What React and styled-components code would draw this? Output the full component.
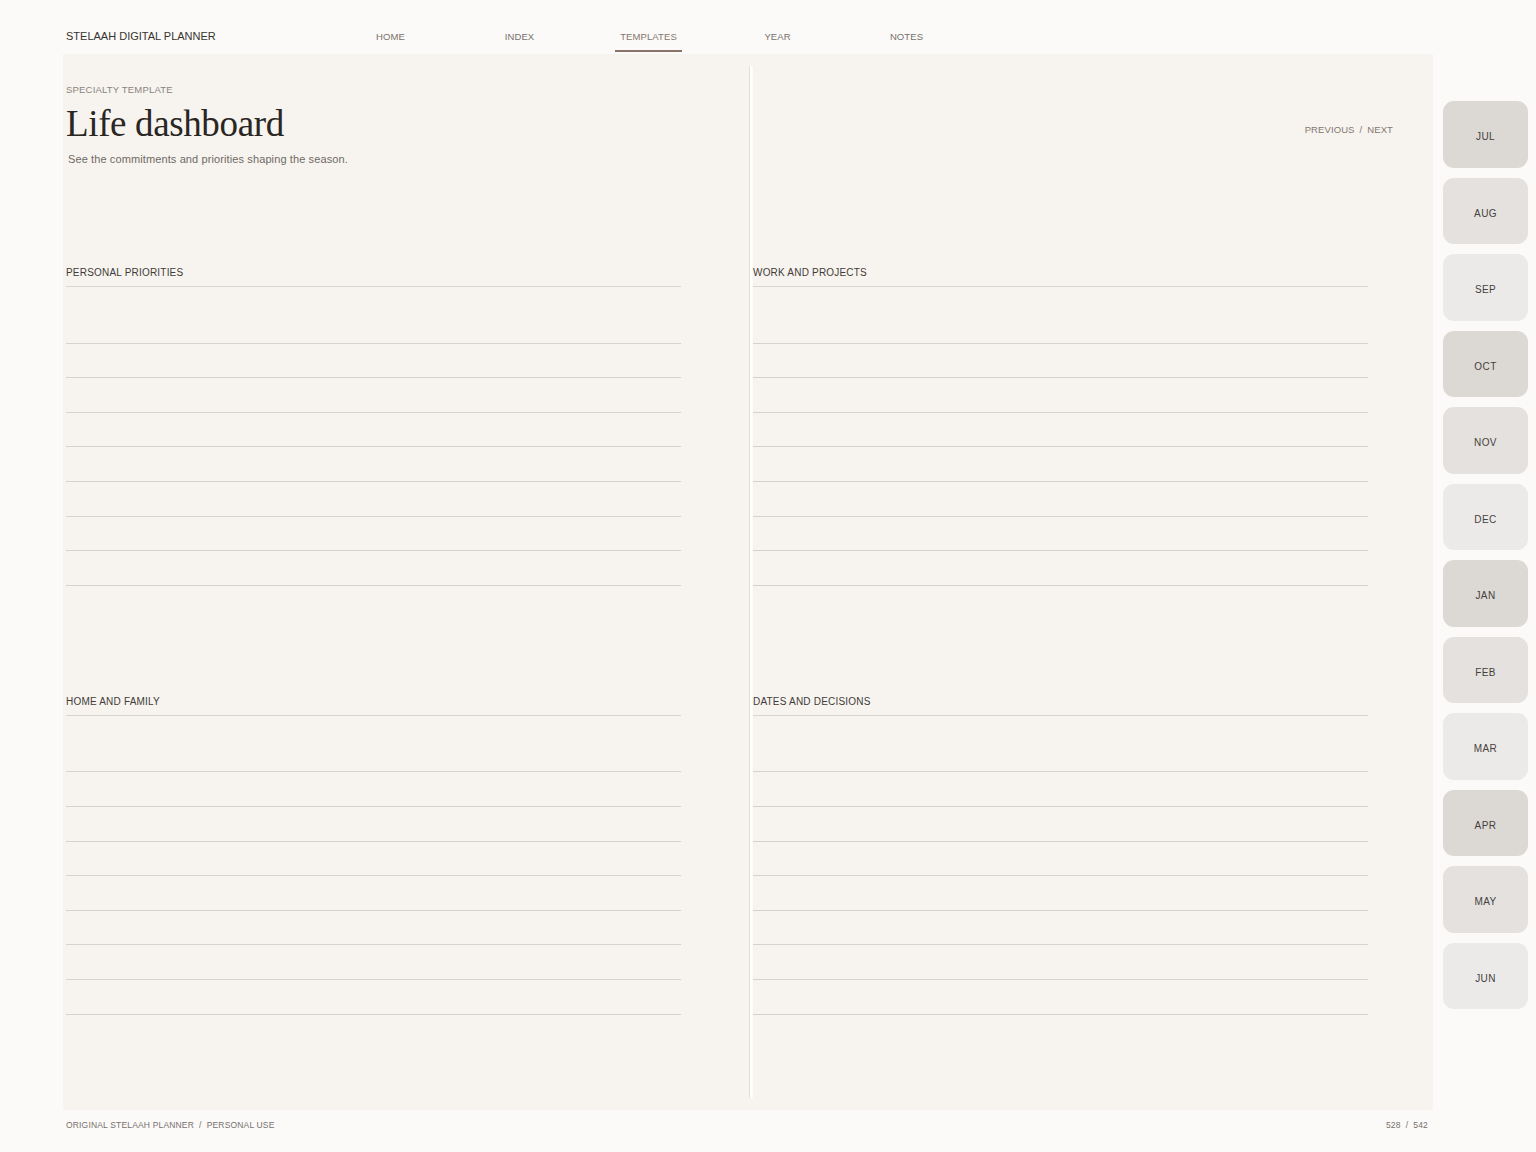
import React from 'react'
import styled, { createGlobalStyle } from 'styled-components'

const GlobalStyle = createGlobalStyle`
  html, body {
    margin: 0;
    padding: 0;
    background: #fbfaf8;
  }
  body {
    font-family: "Liberation Sans", Arial, sans-serif;
    color: #3d3935;
  }
  * {
    box-sizing: border-box;
  }
`

const NAV = ['HOME', 'INDEX', 'TEMPLATES', 'YEAR', 'NOTES']
const MONTHS = ['JUL', 'AUG', 'SEP', 'OCT', 'NOV', 'DEC', 'JAN', 'FEB', 'MAR', 'APR', 'MAY', 'JUN']
const TAB_TONES = ['#dcd8d4', '#e4e1de', '#eceae8']

const Shell = styled.div`
  width: 1536px;
  height: 1152px;
  padding-left: 63px;
  display: flex;
  flex-direction: column;
`

const Header = styled.header`
  height: 54px;
  flex-shrink: 0;
  display: grid;
  grid-template-columns: 260px repeat(5, 129px);
  align-items: end;
  padding-left: 3px;
  padding-bottom: 2px;
`

const Brand = styled.div`
  font-size: 11px;
  line-height: 11px;
  color: #37332f;
  padding-bottom: 10px;
  white-space: nowrap;
`

const NavItem = styled.a`
  justify-self: center;
  font-size: 9.5px;
  line-height: 11px;
  letter-spacing: 0.01em;
  padding: 0 5px 8px;
  color: ${p => (p.$active ? '#85766e' : '#77716c')};
  border-bottom: 2px solid ${p => (p.$active ? '#8a7469' : 'transparent')};
  text-decoration: none;
`

const Main = styled.div`
  display: flex;
  height: 1056px;
  flex-shrink: 0;
`

const Paper = styled.div`
  width: 1370px;
  background: #f7f4ef;
  display: flex;
`

const LeftPage = styled.section`
  width: 686px;
  padding-left: 3px;
  display: flex;
  flex-direction: column;
`

const RightPage = styled.section`
  flex: 1;
  display: flex;
  flex-direction: column;
`

const Spine = styled.div`
  width: 4px;
  margin: 12px 0;
  background: linear-gradient(
    to right,
    #e2ddd7 0,
    #e2ddd7 1px,
    #ffffff 1px,
    #ffffff 3px,
    #f9f7f3 4px
  );
`

const PageHead = styled.div`
  height: 212px;
  flex-shrink: 0;
  display: flex;
  flex-direction: column;
  align-items: ${p => (p.$right ? 'flex-end' : 'flex-start')};
  padding-top: ${p => (p.$right ? '70px' : '30px')};
  padding-right: ${p => (p.$right ? '40px' : '0')};
`

const Eyebrow = styled.div`
  font-size: 9.5px;
  line-height: 12px;
  letter-spacing: 0.02em;
  color: #8a837e;
`

const Title = styled.h1`
  margin: 9px 0 0;
  font-family: "Liberation Serif", "Times New Roman", serif;
  font-weight: 400;
  font-size: 37px;
  line-height: 37px;
  letter-spacing: -0.01em;
  color: #2a2623;
`

const Lede = styled.p`
  margin: 10px 0 0 2px;
  font-size: 11px;
  line-height: 14px;
  letter-spacing: 0.01em;
  color: #6f6964;
`

const Pager = styled.div`
  display: flex;
  gap: 5px;
  font-size: 9.5px;
  line-height: 12px;
  letter-spacing: 0.01em;
  color: #85776f;
`

const Section = styled.div`
  width: 615px;
  flex-shrink: 0;
  margin-bottom: 109px;
`

const SectionLabel = styled.div`
  font-size: 10px;
  line-height: 13px;
  letter-spacing: 0.02em;
  color: #3f3b37;
  padding-bottom: 7px;
  border-bottom: 1px solid #d9d5d0;
`

const Lines = styled.div`
  margin-top: 22px;
`

const Line = styled.div`
  height: 34.6px;
  border-bottom: 1px solid #d6d2cd;
`

const Tabs = styled.nav`
  width: 85px;
  margin-left: 10px;
  padding-top: 47px;
  display: flex;
  flex-direction: column;
  gap: 10px;
`

const Tab = styled.a`
  height: 66.5px;
  flex-shrink: 0;
  border-radius: 11px;
  background: ${p => p.$tone};
  display: flex;
  align-items: center;
  justify-content: center;
  padding-top: 5px;
  font-size: 10px;
  letter-spacing: 0.04em;
  color: #46413d;
  text-decoration: none;
`

const Footer = styled.footer`
  width: 1370px;
  display: flex;
  justify-content: space-between;
  padding: 10px 5px 0 3px;
  font-size: 8.5px;
  line-height: 11px;
  letter-spacing: 0.02em;
  color: #77716c;
`

const Block = ({ label }) => (
  <Section>
    <SectionLabel>{label}</SectionLabel>
    <Lines>
      {Array.from({ length: 8 }).map((_, i) => (
        <Line key={i} />
      ))}
    </Lines>
  </Section>
)

export default function App() {
  return (
    <Shell>
      <GlobalStyle />
      <Header>
        <Brand>STELAAH DIGITAL PLANNER</Brand>
        {NAV.map(item => (
          <NavItem key={item} $active={item === 'TEMPLATES'}>
            {item}
          </NavItem>
        ))}
      </Header>

      <Main>
        <Paper>
          <LeftPage>
            <PageHead>
              <Eyebrow>SPECIALTY TEMPLATE</Eyebrow>
              <Title>Life dashboard</Title>
              <Lede>See the commitments and priorities shaping the season.</Lede>
            </PageHead>
            <Block label="PERSONAL PRIORITIES" />
            <Block label="HOME AND FAMILY" />
          </LeftPage>

          <Spine />

          <RightPage>
            <PageHead $right>
              <Pager>
                <span>PREVIOUS</span>
                <span>/</span>
                <span>NEXT</span>
              </Pager>
            </PageHead>
            <Block label="WORK AND PROJECTS" />
            <Block label="DATES AND DECISIONS" />
          </RightPage>
        </Paper>

        <Tabs>
          {MONTHS.map((m, i) => (
            <Tab key={m} $tone={TAB_TONES[i % 3]}>
              {m}
            </Tab>
          ))}
        </Tabs>
      </Main>

      <Footer>
        <span>ORIGINAL STELAAH PLANNER&nbsp;&nbsp;/&nbsp;&nbsp;PERSONAL USE</span>
        <span>528&nbsp;&nbsp;/&nbsp;&nbsp;542</span>
      </Footer>
    </Shell>
  )
}
